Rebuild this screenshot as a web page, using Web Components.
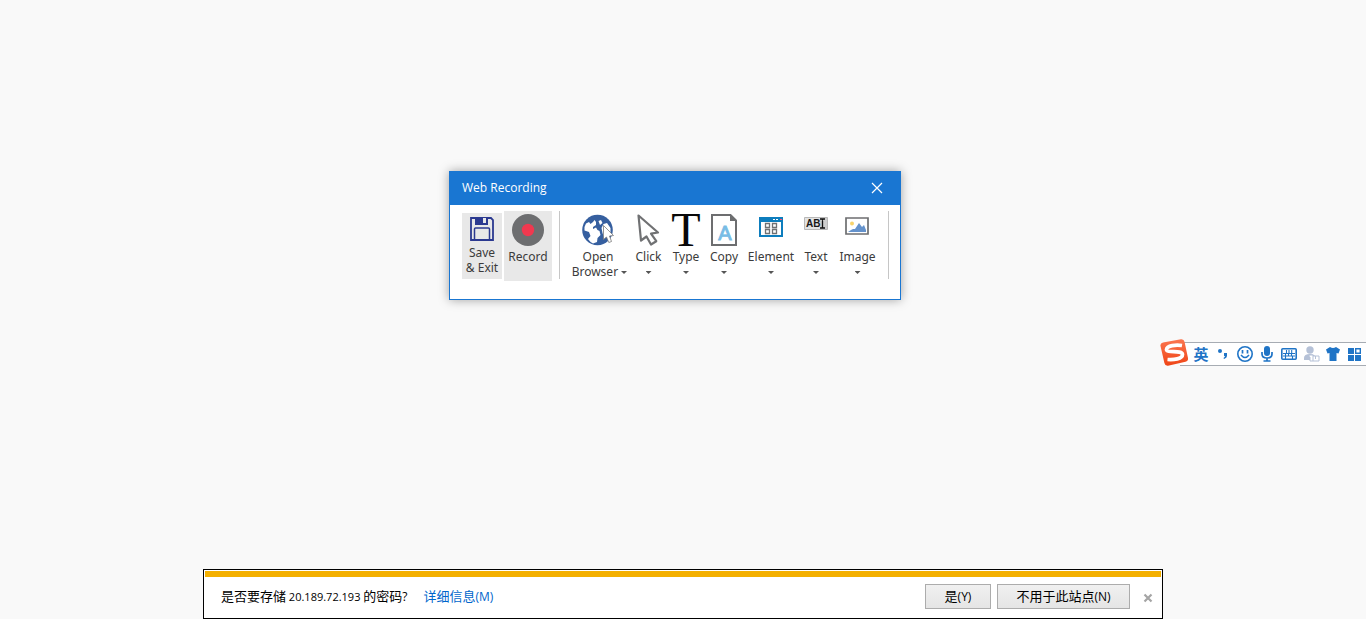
<!DOCTYPE html>
<html lang="zh-CN">
<head>
<meta charset="utf-8">
<title>Web Recording</title>
<style>
html, body { margin: 0; height: 100%; }
body { background: #f9f9f9; font-family: "Open Sans", "Noto Sans CJK SC", sans-serif; }
</style>
</head>
<body>
<desk-top></desk-top>
<script>
function define(name, html) {
  const t = document.createElement('template');
  t.innerHTML = html;
  customElements.define(name, class extends HTMLElement {
    connectedCallback() {
      if (this.shadowRoot) return;
      this.attachShadow({ mode: 'open' }).append(t.content.cloneNode(true));
    }
  });
}

define('tool-button', `
<style>
:host { display: block; flex: none; }
button { width: 100%; border: 0; padding: 3px 0 0; background: none; color: #3b3b3b; display: flex; flex-direction: column; align-items: center; gap: 3px; font: 12px/15px "Noto Sans", sans-serif; height: 70px; }
:host([tone=filled]) button { background: #e8e8e8; }
:host([compact]) button { height: 66px; }
.label { white-space: nowrap; text-align: center; }
.drop { display: none; width: 6px; height: 3px; background: #555; clip-path: polygon(0 0, 100% 0, 50% 100%); margin-top: 4px; }
:host([menu]) .drop { display: block; }
:host([menu=inline]) button { position: relative; }
:host([menu=inline]) .drop { position: absolute; right: 3px; bottom: 7px; margin: 0; }
::slotted(svg) { display: block; overflow: visible; }
</style>
<button type="button"><slot name="icon"></slot><span class="label"><slot></slot></span><span class="drop"></span></button>`);

define('tool-divider', `<style>:host { display: block; width: 1px; height: 68px; background: #c6c6c6; flex: none; }</style>`);

define('recorder-window', `
<style>
:host { display: block; box-sizing: border-box; width: 452px; background: #fff; border: 1px solid #1976d2; box-shadow: 0 0 10px rgba(0,0,0,.35); }
header { box-sizing: border-box; background: #1976d2; color: #fff; display: flex; align-items: center; justify-content: space-between; padding: 0 17px 2px 12px; height: 33px; }
h1 { margin: 0; font: 12px/16px "Open Sans", sans-serif; }
header button { border: 0; background: none; padding: 0; color: #fff; display: block; }
header svg { display: block; }
.tools { display: flex; align-items: flex-start; padding: 6px 12px 18px; }
.save { width: 40px; margin: 2px 2px 0 0; }
.record { width: 48px; margin-right: 7px; }
.open { width: 64px; margin-left: 6px; }
.click { width: 37px; }
.type, .copy { width: 38px; }
.element { width: 56px; }
.text { width: 34px; }
.image { width: 49px; margin-right: 6px; }
</style>
<header><h1>Web Recording</h1><button type="button" aria-label="Close"><svg width="12" height="12" viewBox="0 0 12 12"><path d="M1 1l10 10M11 1L1 11" stroke="#fff" stroke-width="1.2"/></svg></button></header>
<div class="tools">
<tool-button class="save" tone="filled" compact>
<svg slot="icon" width="26" height="26" viewBox="0 0 26 26" fill="none" stroke="#2b3990" stroke-width="1.8"><path d="M2 2h20l2 2v20H2z"/><path d="M6 1h13v8H6z" fill="#2b3990" stroke="none"/><path d="M14 2h3v5h-3z" fill="#e8e8e8" stroke="none"/><path d="M5.500 24V13q0-1 1-1h13q1 0 1 1v11" stroke-width="1.500"/></svg>Save<br>&amp; Exit</tool-button>
<tool-button class="record" tone="filled">
<svg slot="icon" width="32" height="32"><circle cx="16" cy="16" r="16" fill="#6d6e70"/><circle cx="16" cy="16" r="6.200" fill="#f0384f"/></svg>Record</tool-button>
<tool-divider></tool-divider>
<tool-button class="open" menu="inline">
<svg slot="icon" width="32" height="32" viewBox="0 0 32 32"><circle cx="15.500" cy="16" r="15.300" fill="#365f9f"/><path d="M2.500 13L4 9.500 7 8 8.500 10 11 8 12.500 6 14 8 14 11 11 13 11 15 14 13.500 15.500 16 17.500 17 18.500 21 15.500 24 15 28 11 29.500Q8 28 6 25L8.500 22 7 18 2.500 16.500z" fill="#fff"/><path d="M16.500 7L19 6 20.500 9 18 11zM19.500 14L21.500 10 25 9 28.500 14 28.500 21 22 23 20.500 19z" fill="#fff"/><path d="M21.500 11.500L21.500 25.500 24.500 23 26.800 28.500 29.500 27.500 27.500 22 31.500 21.500z" fill="#fff" stroke="#7a7a7a" stroke-width=".8"/></svg>Open<br>Browser&nbsp;&nbsp;</tool-button>
<tool-button class="click" menu>
<svg slot="icon" width="32" height="32" viewBox="0 0 32 32"><path d="M5.500 1.500L25 18.500 18 19.700 23.300 27.200 18 30.500 13.500 22.500 8 26.500z" fill="#fff" stroke="#707173" stroke-width="2.200" stroke-linejoin="round"/></svg>Click</tool-button>
<tool-button class="type" menu>
<svg slot="icon" width="32" height="32" viewBox="0 0 32 32"><text x="16" y="32" text-anchor="middle" font-family="Liberation Serif, serif" font-size="48" fill="#080808">T</text></svg>Type</tool-button>
<tool-button class="copy" menu>
<svg slot="icon" width="32" height="32" viewBox="0 0 32 32"><path d="M4 1h18.500l5.500 5.500V31H4z" fill="#fff" stroke="#6d6e70" stroke-width="2"/><path d="M22 0l7 7h-7z" fill="#6d6e70"/><text x="17" y="26" text-anchor="middle" font-family="Liberation Sans, sans-serif" font-size="20" fill="#78bce5" stroke="#78bce5" stroke-width=".9">A</text></svg>Copy</tool-button>
<tool-button class="element" menu>
<svg slot="icon" width="32" height="32" viewBox="0 0 32 32"><path d="M4 3h24v20H4z" fill="#0d7dbd"/><path d="M6 8h20v13H6z" fill="#fff"/><path d="M18 5h2v1h-2zM21 5h2v1h-2z" fill="#fff"/><path d="M25 5h2v1h-2z" fill="#ff547c"/><path d="M10.500 9.500h4v4h-4zM17.500 9.500h4v4h-4zM10.500 15.500h4v4h-4zM17.500 15.500h4v4h-4z" fill="#fff" stroke="#707173" stroke-width="1.300"/></svg>Element</tool-button>
<tool-button class="text" menu>
<svg slot="icon" width="32" height="32" viewBox="0 0 32 32"><path d="M4.500 3.500h23v12h-23z" fill="#e3e3e3" stroke="#b8b8b8"/><path d="M20 4h7v11h-7z" fill="#cecece"/><text x="6" y="13" font-family="Liberation Sans, sans-serif" font-weight="700" font-size="10" fill="#171717">AB</text><path d="M20 5h2l.5 1 .5-1h2M22.500 5.500v8M20 14h2l.5-1 .5 1h2" fill="none" stroke="#111" stroke-width="1.300"/></svg>Text</tool-button>
<tool-button class="image" menu>
<svg slot="icon" width="32" height="32" viewBox="0 0 32 32"><path d="M4 4h22v16H4z" fill="#fff" stroke="#6d6e70" stroke-width="1.700"/><circle cx="10" cy="9.500" r="2" fill="#f8d36c"/><path d="M6 18l3-2 2-1 2 0 4-6 3 4 2-2 2 5v2z" fill="#6492cc"/></svg>Image</tool-button>
<tool-divider></tool-divider>
</div>`);

define('ime-bar', `
<style>
:host { display: flex; align-items: center; height: 28px; }
.logo { display: block; position: relative; flex: none; margin-right: -8px; }
.strip { display: flex; box-sizing: border-box; height: 24px; padding-left: 10px; margin-top: 2px; border: solid #a7acb3; border-width: 1px 0; background: #fff; }
button { width: 22px; padding: 0; border: 0; background: none; color: #1f74c6; display: flex; align-items: center; justify-content: center; font: 700 15px/22px "Noto Sans CJK SC", sans-serif; }
svg { display: block; }
</style>
<svg class="logo" width="28" height="28" viewBox="0 0 28 28"><defs><linearGradient id="g" x1="0" y1="0" x2="0" y2="1"><stop offset="0" stop-color="#fb7650"/><stop offset="1" stop-color="#ef4516"/></linearGradient></defs><path d="M3 3.500L21 .3Q24 0 24.600 3L28 19Q28.500 22 25.500 22.700L8 26.700Q5 27 4.400 24L.5 7Q0 4 3 3.500z" fill="url(#g)"/><path d="M22 6.500C16 5.500 7 6.500 6.500 10.500C6.500 14.500 22 10.500 22.500 15.500C22.500 20 13.500 21 7.500 20.500" fill="none" stroke="#fff" stroke-width="3.700"/></svg>
<div class="strip">
<button type="button">英</button>
<button type="button" aria-label="Punctuation"><svg width="18" height="18" viewBox="0 0 18 18" fill="#1f74c6"><circle cx="6" cy="6" r="2"/><path d="M10 8h3v3q0 2-3 3l-.5-1q1.500-.8 1.500-2h-1z"/></svg></button>
<button type="button" aria-label="Emoji"><svg width="18" height="18" viewBox="0 0 18 18"><circle cx="9" cy="9" r="7.200" fill="none" stroke="#1f74c6" stroke-width="1.600"/><path d="M6.500 5v3.500M11.500 5v3.500" stroke="#1f74c6" stroke-width="1.700"/><path d="M5 10q4 5 8 0" fill="none" stroke="#1f74c6" stroke-width="1.500"/></svg></button>
<button type="button" aria-label="Voice"><svg width="18" height="18" viewBox="0 0 18 18"><rect x="6" y="1" width="6" height="10" rx="3" fill="#1f74c6"/><path d="M4 7v2q0 4 5 4t5-4V7M9 13v3M5.500 16h7" fill="none" stroke="#1f74c6" stroke-width="1.700"/></svg></button>
<button type="button" aria-label="Keyboard"><svg width="18" height="18" viewBox="0 0 18 18"><rect x="1.800" y="3.800" width="14.400" height="10.400" rx="1" fill="#fff" stroke="#1f74c6" stroke-width="1.600"/><path d="M4 6h2v2H4zM7 6h1.500v2H7zM9.500 6H11v2H9.500zM12 6h2v2h-2zM4 9h1.500v1.500H4zM6.500 9H8v1.500H6.500zM9 9h1.500v1.500H9zM11.500 9H14v1.500h-2.500zM4 11.500h1.500V13H4zM6.500 11.500h5V13h-5zM12.500 11.500H14V13h-1.500z" fill="#fff"/><path d="M3 8.500h12M3 11h12M6.500 5v3.500M9 5v3.500M11.700 5v3.500M5.500 8.500V11M8.500 8.500V11M11.500 8.500V11M5.500 11v3M12.500 11v3" stroke="#1f74c6" stroke-width="1.100"/></svg></button>
<button type="button" aria-label="Account"><svg width="18" height="18" viewBox="0 0 18 18"><circle cx="8" cy="5" r="3.700" fill="#b5c1d7"/><path d="M2 15v-2q0-4 6-4 4 0 5 2v4z" fill="#b5c1d7"/><path d="M7 10h4v1h6v5H8v-4H7z" fill="#fff" stroke="#b5c1d7"/><path d="M11 11v5M13.500 11v3" stroke="#b5c1d7"/></svg></button>
<button type="button" aria-label="Skin"><svg width="18" height="18" viewBox="0 0 18 18"><path d="M6 2q3 2 6 0l4 2.500-1.500 4-2-.5v8h-7V8l-2 .5L2 4.500z" fill="#1f74c6"/></svg></button>
<button type="button" aria-label="Toolbox"><svg width="18" height="18" viewBox="0 0 18 18" fill="#1f74c6"><path d="M2 3h6v6H2zM2 10h6v6H2zM9 10h6v6H9z"/><path d="M9.700 3.700h4.600v4.600H9.700z" fill="none" stroke="#1f74c6" stroke-width="1.400"/></svg></button>
</div>`);

define('password-bar', `
<style>
:host { display: block; box-sizing: border-box; width: 960px; max-width: 100%; padding: 1px; background: #fff; border: 1px solid #000; color: #000; font: 13px/20px "Noto Sans CJK SC", sans-serif; }
.accent { height: 6px; background: #f4b000; }
.row { display: flex; align-items: center; padding: 7px 8px 8px 16px; }
p { margin: 0; padding-bottom: 2px; white-space: nowrap; }
.latin { font: 12px "Open Sans", sans-serif; }
.ip { font: 11px "Open Sans", sans-serif; }
a { margin-left: 16px; padding-bottom: 2px; color: #0066cc; text-decoration: none; white-space: nowrap; }
.actions { margin-left: auto; display: flex; align-items: center; gap: 6px; }
button { box-sizing: border-box; height: 25px; border: 1px solid #acacac; background: linear-gradient(#f0f0f0, #e5e5e5); color: #000; padding: 0 0 2px; font: 13px/20px "Noto Sans CJK SC", sans-serif; white-space: nowrap; }
.yes { width: 66px; }
.never { width: 133px; }
.close { border: 0; background: none; padding: 0; width: 10px; margin-left: 7px; }
.close svg { display: block; margin-top: 3px; }
</style>
<div class="accent"></div>
<div class="row"><p>是否要存储<span class="ip"> 20.189.72.193 </span>的密码<span class="latin">?</span></p><a href="#">详细信息<span class="latin">(M)</span></a>
<div class="actions"><button type="button" class="yes">是<span class="latin">(Y)</span></button><button type="button" class="never">不用于此站点<span class="latin">(N)</span></button><button type="button" class="close" aria-label="关闭"><svg width="10" height="10" viewBox="0 0 10 10"><path d="M1.500 1.500l7 7M8.500 1.500l-7 7" stroke="#a5a5a5" stroke-width="2.200"/></svg></button></div></div>`);

define('desk-top', `
<style>
:host { display: flex; flex-direction: column; justify-content: flex-end; align-items: center; position: relative; min-height: 100vh; overflow: hidden; }
recorder-window { position: absolute; left: calc(50% - 234px); top: 171px; }
ime-bar { position: absolute; right: 0; top: 339px; }
</style>
<recorder-window></recorder-window>
<ime-bar></ime-bar>
<password-bar></password-bar>`);
</script>
</body>
</html>
